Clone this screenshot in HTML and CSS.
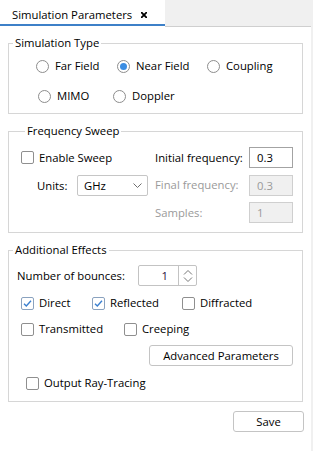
FILE: index.html
```html
<!DOCTYPE html>
<html>
<head>
<meta charset="utf-8">
<title>Simulation Parameters</title>
<link rel="stylesheet" href="styles.css">
</head>
<body>
<div class="window">
  <div class="tabbar">
    <div class="tab">
      <div class="tab-inner">
        <span class="tab-title">Simulation Parameters</span>
        <svg class="tab-close" width="6" height="6" viewBox="0 0 6 6"><path d="M0.7 0.7 L5.3 5.3 M5.3 0.7 L0.7 5.3" stroke="#000" stroke-width="1.8" stroke-linecap="square"/></svg>
      </div>
    </div>
    <div class="tab-fill"></div>
  </div>

  <div class="panel">
    <fieldset class="group g-type">
      <legend>Simulation Type</legend>
      <div class="radio-row row-a">
        <label class="radio w81"><span class="rb"></span>Far Field</label>
        <label class="radio w90"><span class="rb on"></span>Near Field</label>
        <label class="radio"><span class="rb"></span>Coupling</label>
      </div>
      <div class="radio-row row-b">
        <label class="radio w75"><span class="rb"></span>MIMO</label>
        <label class="radio"><span class="rb"></span>Doppler</label>
      </div>
    </fieldset>

    <fieldset class="group g-freq">
      <legend>Frequency Sweep</legend>
      <div class="freq">
        <label class="check"><span class="cb"></span>Enable Sweep</label>
        <span class="flabel">Initial frequency:</span>
        <div class="input">0.3</div>

        <div class="units">
          <span class="units-label">Units:</span>
          <div class="select">GHz<svg class="chev" width="9" height="5" viewBox="0 0 9 5"><path d="M0.5 0.5 L4.5 4.5 L8.5 0.5" fill="none" stroke="#6e6e6e" stroke-width="1"/></svg></div>
        </div>
        <span class="flabel disabled">Final frequency:</span>
        <div class="input disabled">0.3</div>

        <span></span>
        <span class="flabel disabled">Samples:</span>
        <div class="input disabled">1</div>
      </div>
    </fieldset>

    <fieldset class="group g-fx">
      <legend>Additional Effects</legend>
      <div class="fx">
        <div class="bounces">
          <span class="bounces-label">Number of bounces:</span>
          <div class="spin">
            <div class="spin-val">1</div>
            <div class="spin-btn">
              <svg width="10" height="16" viewBox="0 0 10 16"><path d="M1 6.5 L5 2.5 L9 6.5 M1 9.5 L5 13.5 L9 9.5" fill="none" stroke="#777" stroke-width="1"/></svg>
            </div>
          </div>
        </div>
        <div class="check-row row-1">
          <label class="check w71"><span class="cb on"><svg width="11" height="11" viewBox="0 0 11 11"><path d="M2 5.8 L4.3 8 L9 2.8" fill="none" stroke="#3a7fcf" stroke-width="1.4"/></svg></span>Direct</label>
          <label class="check w90"><span class="cb on"><svg width="11" height="11" viewBox="0 0 11 11"><path d="M2 5.8 L4.3 8 L9 2.8" fill="none" stroke="#3a7fcf" stroke-width="1.4"/></svg></span>Reflected</label>
          <label class="check"><span class="cb"></span>Diffracted</label>
        </div>
        <div class="check-row row-2">
          <label class="check w103"><span class="cb"></span>Transmitted</label>
          <label class="check"><span class="cb"></span>Creeping</label>
        </div>
        <button class="btn adv">Advanced Parameters</button>
        <div class="check-row row-out">
          <label class="check"><span class="cb"></span>Output Ray-Tracing</label>
        </div>
      </div>
    </fieldset>

    <div class="footer">
      <button class="btn save">Save</button>
    </div>
  </div>
</div>
</body>
</html>
```

FILE: styles.css
```css
* { box-sizing: border-box; }
html, body { margin: 0; padding: 0; }
body {
  background: #f0f0f0;
  font-family: "Open Sans", "Noto Sans", sans-serif;
  font-size: 11.3px;
  color: #000;
  width: 313px;
  height: 451px;
  overflow: hidden;
}
.window {
  width: 311px;
  height: 451px;
  display: flex;
  flex-direction: column;
}
.tabbar {
  display: flex;
  height: 27px;
  background: #f0f0f0;
  flex: none;
}
.tab {
  width: 165px;
  height: 27px;
  background: #fff;
}
.tab-inner {
  height: 26px;
  border-bottom: 2px solid #3d80c8;
  display: flex;
  align-items: flex-start;
  padding: 7px 0 0 12px;
}
.tab-title { line-height: 16px; }
.tab-close { margin: 5px 0 0 auto; margin-right: 18px; }
.tab-fill { flex: 1; border-bottom: 1px solid #cfcfcf; }

.panel {
  flex: 1;
  background: #fff;
  padding: 8px 8px 0;
  display: flex;
  flex-direction: column;
}

.group {
  margin: 0;
  padding: 0;
  border: 1px solid #d6d6d6;
  min-width: 0;
}
.group legend {
  margin-left: 4px;
  padding: 0 2px;
  line-height: 16px;
}
.g-freq, .g-fx { margin-top: 9px; }

/* Simulation type */
.g-type { padding: 5px 0 7px; }
.radio-row { display: flex; height: 20px; align-items: center; }
.row-a { padding-left: 27px; }
.row-b { padding-left: 29px; margin-top: 10px; }
.radio, .check { display: flex; align-items: center; line-height: 16px; white-space: nowrap; }
.w71 { width: 71px; }
.w75 { width: 75px; }
.w81 { width: 81px; }
.w90 { width: 90px; }
.w103 { width: 103px; }
.rb {
  width: 13px; height: 13px;
  border: 1px solid #8d8d8d;
  border-radius: 50%;
  margin-right: 6px;
  display: flex; align-items: center; justify-content: center;
  flex: none;
}
.rb.on::after {
  content: "";
  width: 7px; height: 7px;
  border-radius: 50%;
  background: #3b8de2;
}
.cb {
  width: 13px; height: 13px;
  border: 1px solid #8f8f8f;
  border-radius: 2px;
  margin-right: 5px;
  display: flex; align-items: center; justify-content: center;
  flex: none;
  background: #fff;
}
.cb.on { border-color: #8aa2bf; }

/* Frequency */
.g-freq { padding: 8px 9px 9px 12px; }
.freq {
  display: grid;
  grid-template-columns: 134px 94px 44px;
  grid-template-rows: 21px 21px 21px;
  row-gap: 6.5px;
  align-items: center;
}
.flabel { line-height: 16px; }
.disabled { color: #9a9a9a; }
.input {
  height: 21px;
  border: 1px solid #a3a3a3;
  padding-left: 7px;
  line-height: 19px;
  background: #fff;
}
.input.disabled {
  background: #f0f0f0;
  border-color: #cfcfcf;
}
.units { display: flex; align-items: center; padding-left: 16px; }
.units-label { width: 40px; }
.select {
  width: 71px; height: 21px;
  border: 1px solid #c6c6c6;
  border-radius: 2px;
  display: flex; align-items: center;
  padding: 0 6px 0 6px;
  background: #fff;
}
.chev { margin-left: auto; margin-right: -1px; }

/* Additional effects */
.g-fx { padding: 7px 0 8px; }
.fx { display: flex; flex-direction: column; }
.bounces { display: flex; align-items: center; padding-left: 8px; height: 21px; }
.bounces-label { width: 121px; }
.spin {
  display: flex;
  height: 21px;
  border: 1px solid #c3c3c3;
  border-radius: 2px;
}
.spin-val {
  width: 39px;
  text-align: right;
  padding-right: 10px;
  line-height: 19px;
  color: #2a0a3a;
}
.spin-btn {
  width: 18px;
  border-left: 1px solid #c3c3c3;
  display: flex; align-items: center; justify-content: center;
}
.check-row { display: flex; height: 20px; align-items: center; padding-left: 12px; }
.row-1 { margin-top: 7px; }
.row-2 { margin-top: 6px; }
.row-out { margin-top: 7px; padding-left: 17px; }

.btn {
  font: inherit;
  color: #000;
  background: #fff;
  border: 1px solid #c4c4c4;
  border-radius: 3px;
  height: 21px;
  padding: 0;
  line-height: 19px;
}
.adv {
  align-self: flex-end;
  width: 144px;
  margin: 6px 9px 0 0;
}
.footer { display: flex; justify-content: flex-end; margin-top: 9px; margin-right: -1px; }
.save { width: 71px; }
```
